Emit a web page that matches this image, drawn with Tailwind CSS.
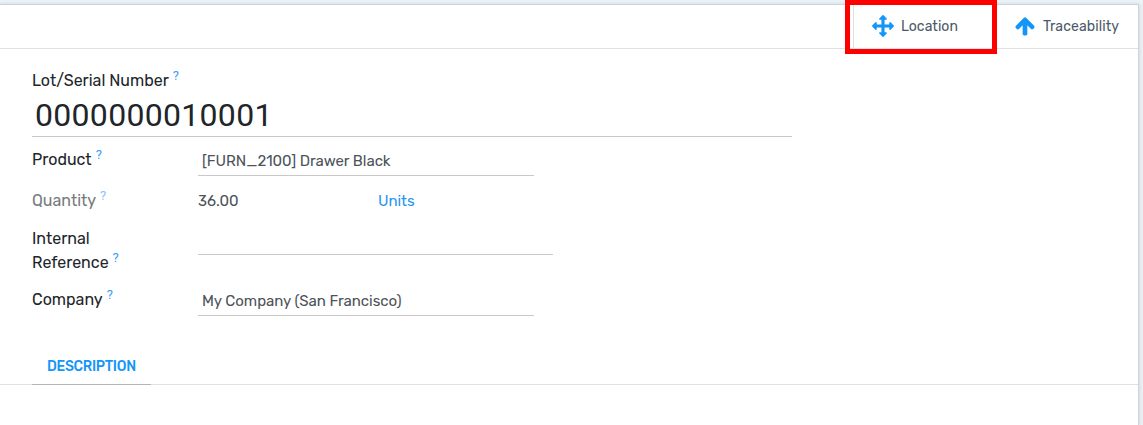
<!DOCTYPE html>
<html lang="en">
<head>
<meta charset="utf-8">
<title>Lot/Serial Number</title>
<script src="https://cdn.jsdelivr.net/npm/@tailwindcss/browser@4"></script>
</head>
<body class="h-[425px] w-[1143px] overflow-hidden bg-[#ebf0f4] font-[Rubik,Roboto,sans-serif] text-[#212529]">
<div class="h-1 bg-[#eaf3f8]"></div>
<main class="h-[421px] w-[1139px] border-t border-r border-[#cfd3da] bg-white shadow-[0_0_4px_rgba(0,0,0,0.12)]">
  <div class="flex h-11 justify-end border-b border-[#dee2e6] text-[#4c5a67]">
    <div class="relative flex h-[43px] w-[143px] items-center border-l border-[#dee2e6] pl-[18px]">
      <div class="absolute -top-[5px] -left-[9px] h-[54px] w-[152px] border-[5px] border-[#ff0000]"></div>
      <svg class="mb-px size-[22px]" viewBox="0 0 1792 1792" fill="#1396f8"><path d="M1792 896q0 26-19 45l-256 256q-19 19-45 19t-45-19-19-45v-128h-384v384h128q26 0 45 19t19 45-19 45l-256 256q-19 19-45 19t-45-19l-256-256q-19-19-19-45t19-45 45-19h128v-384h-384v128q0 26-19 45t-45 19-45-19l-256-256q-19-19-19-45t19-45l256-256q19-19 45-19t45 19 19 45v128h384v-384h-128q-26 0-45-19t-19-45 19-45l256-256q19-19 45-19t45 19l256 256q19 19 19 45t-19 45-45 19h-128v384h384v-128q0-26 19-45t45-19 45 19l256 256q19 19 19 45z"/></svg>
      <span class="ml-[7px] text-sm tracking-[0.05px]">Location</span>
    </div>
    <div class="flex h-[43px] w-[142px] items-center pl-[18px]">
      <svg class="mb-px size-[22px]" viewBox="0 0 1792 1792" fill="#1396f8"><path d="M1675 971q0 51-37 90l-75 75q-38 38-91 38-54 0-90-38l-294-293v704q0 52-37.5 84.5t-90.5 32.5h-128q-53 0-90.5-32.5t-37.5-84.5v-704l-294 293q-36 38-90 38t-90-38l-75-75q-38-38-38-90 0-53 38-91l651-651q35-37 90-37 54 0 91 37l651 651q37 39 37 91z"/></svg>
      <span class="ml-[7px] text-sm tracking-[0.1px]">Traceability</span>
    </div>
  </div>
  <div class="h-[88px] w-[792px] pl-8">
    <div class="flex h-full flex-col border-b border-[#c9c9c9] pt-5">
      <div class="flex h-6 text-base leading-6"><span>Lot/Serial Number</span><span class="ml-1 -mt-1 font-[Roboto,sans-serif] text-[13px] leading-[22px] text-[#3d9cf5]">?</span></div>
      <div class="pt-[1px] pl-[3px] font-[Roboto,sans-serif] text-[32px] leading-[42px] tracking-[0.3px]">0000000010001</div>
    </div>
  </div>
  <div class="flex h-[39px] pl-8">
    <div class="flex w-[166px] pt-[11px] text-base leading-6"><span>Product</span><span class="ml-1 -mt-1 font-[Roboto,sans-serif] text-[13px] leading-[22px] text-[#3d9cf5]">?</span></div>
    <div class="w-[336px] border-b border-[#c9c9c9] pt-[12px] pl-1 text-[15px] leading-6 tracking-[-0.04px] text-[#4c5359]">[FURN_2100] Drawer Black</div>
  </div>
  <div class="flex h-[42px] pl-8">
    <div class="flex w-[166px] pt-[13px] text-base leading-6 text-[#777a7d]"><span>Quantity</span><span class="ml-1 -mt-1 font-[Roboto,sans-serif] text-[13px] leading-[22px] text-[#8bc2f9]">?</span></div>
    <div class="w-[180px] pt-[13px] text-[15px] leading-6 tracking-[-0.04px] text-[#4c5359]">36.00</div>
    <div class="pt-[13px] text-[15px] leading-6 tracking-[-0.04px] text-[#1f96f3]">Units</div>
  </div>
  <div class="flex h-[61px] pl-8">
    <div class="w-[166px] pt-[9px] text-base leading-6"><div>Internal</div><div class="flex"><span>Reference</span><span class="ml-1 -mt-1 font-[Roboto,sans-serif] text-[13px] leading-[22px] text-[#3d9cf5]">?</span></div></div>
    <div class="h-[37px] w-[355px] border-b border-[#c9c9c9]"></div>
  </div>
  <div class="flex h-[37px] pl-8">
    <div class="flex w-[166px] pt-[9px] text-base leading-6"><span>Company</span><span class="ml-1 -mt-1 font-[Roboto,sans-serif] text-[13px] leading-[22px] text-[#3d9cf5]">?</span></div>
    <div class="w-[336px] border-b border-[#c9c9c9] pt-[10px] pl-1 text-[15px] leading-6 tracking-[-0.04px] text-[#4c5359]">My Company (San Francisco)</div>
  </div>
  <div class="flex h-[69px]">
    <div class="w-8 border-b border-[#dee2e6]"></div>
    <div class="w-[119px] border-b border-[#b5b5b5] pt-[39px] pl-[15px] text-sm leading-6 font-medium tracking-[-0.32px] text-[#1396f8]">DESCRIPTION</div>
    <div class="flex-1 border-b border-[#dee2e6]"></div>
  </div>
</main>
</body>
</html>
